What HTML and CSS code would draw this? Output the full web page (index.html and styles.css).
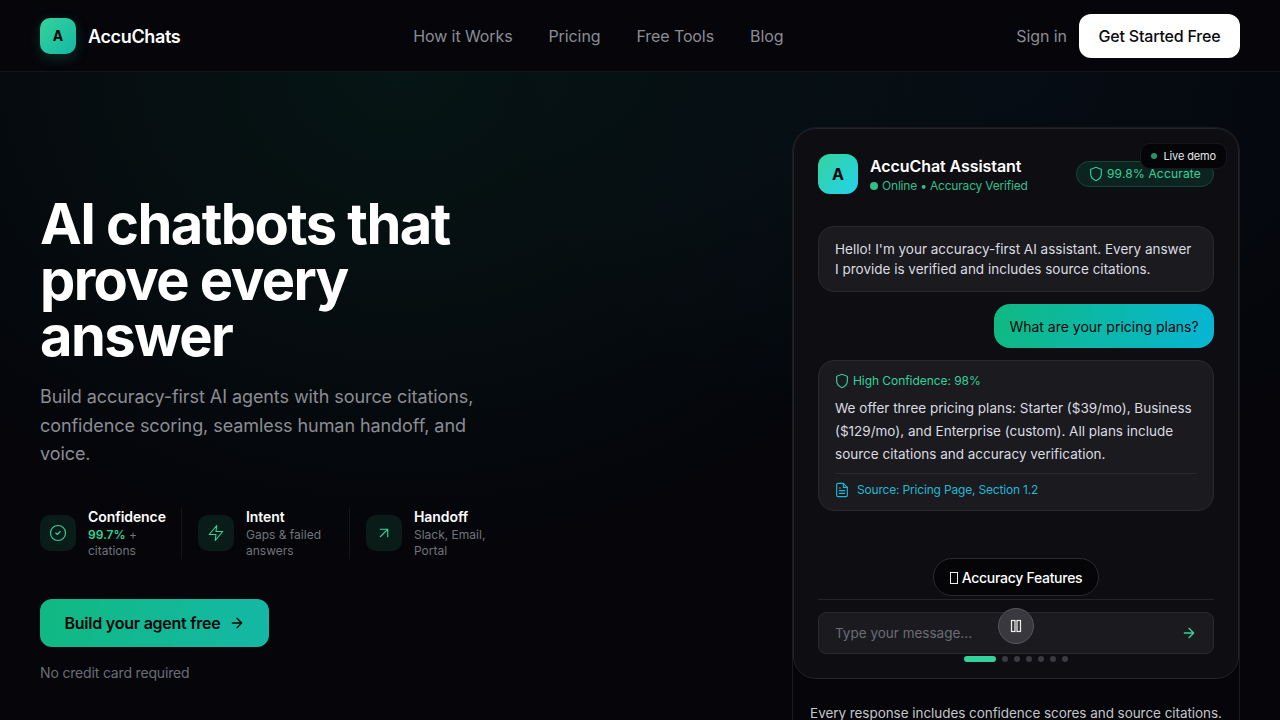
FILE: index.html
```html
<!DOCTYPE html>
<html lang="en">
<head>
<meta charset="utf-8">
<title>AccuChats</title>
<link rel="stylesheet" href="styles.css">
</head>
<body>
<header class="nav">
  <a class="brand"><span class="brand-mark">A</span><span class="brand-name">AccuChats</span></a>
  <nav class="nav-links"><a>How it Works</a><a>Pricing</a><a>Free Tools</a><a>Blog</a></nav>
  <div class="nav-actions"><a class="signin">Sign in</a><a class="btn-white">Get Started Free</a></div>
</header>
<main class="hero">
  <section class="hero-left">
    <h1>AI chatbots that prove every answer</h1>
    <p class="lead">Build accuracy-first AI agents with source citations, confidence scoring, seamless human handoff, and voice.</p>
    <div class="stats">
      <div class="stat stat-a">
        <span class="stat-icon"><svg viewBox="0 0 24 24"><circle cx="12" cy="12" r="10"/><path d="m9 12 2 2 4-4"/></svg></span>
        <div><div class="stat-title">Confidence</div><div class="stat-sub"><b>99.7%</b> + citations</div></div>
      </div>
      <div class="stat stat-b">
        <span class="stat-icon"><svg viewBox="0 0 24 24"><path d="M13 2 3 14h9l-1 8 10-12h-9l1-8z"/></svg></span>
        <div><div class="stat-title">Intent</div><div class="stat-sub">Gaps &amp; failed answers</div></div>
      </div>
      <div class="stat stat-c">
        <span class="stat-icon"><svg viewBox="0 0 24 24"><path d="M7 17 17 7M7 7h10v10"/></svg></span>
        <div><div class="stat-title">Handoff</div><div class="stat-sub">Slack, Email, Portal</div></div>
      </div>
    </div>
    <a class="cta">Build your agent free <svg viewBox="0 0 24 24"><path d="M5 12h14M12 5l7 7-7 7"/></svg></a>
    <p class="note">No credit card required</p>
  </section>
  <aside class="demo-wrap">
    <div class="demo">
      <div class="live"><i></i>Live demo</div>
      <div class="demo-head">
        <span class="avatar">A</span>
        <div class="who">
          <div class="who-name">AccuChat Assistant</div>
          <div class="who-status"><i></i>Online • Accuracy Verified</div>
        </div>
        <span class="accurate"><svg viewBox="0 0 24 24"><path d="M12 22s8-3.500 8-10V5l-8-3-8 3v7c0 6.500 8 10 8 10z"/></svg>99.8% Accurate</span>
      </div>
      <div class="msg msg-bot">Hello! I'm your accuracy-first AI assistant. Every answer I provide is verified and includes source citations.</div>
      <div class="msg msg-user">What are your pricing plans?</div>
      <div class="msg msg-answer">
        <div class="conf"><svg viewBox="0 0 24 24"><path d="M12 22s8-3.500 8-10V5l-8-3-8 3v7c0 6.500 8 10 8 10z"/></svg>High Confidence: 98%</div>
        <p>We offer three pricing plans: Starter ($39/mo), Business ($129/mo), and Enterprise (custom). All plans include source citations and accuracy verification.</p>
        <div class="source"><svg viewBox="0 0 24 24"><path d="M14 2H6a2 2 0 0 0-2 2v16a2 2 0 0 0 2 2h12a2 2 0 0 0 2-2V8z"/><path d="M14 2v6h6M16 13H8M16 17H8M10 9H8"/></svg>Source: Pricing Page, Section 1.2</div>
      </div>
      <div class="pill-row"><span class="pill"><i class="tofu"></i>Accuracy Features</span></div>
      <div class="composer">
        <div class="input"><span>Type your message...</span><svg viewBox="0 0 24 24"><path d="M5 12h14M12 5l7 7-7 7"/></svg></div>
        <span class="pause"><svg viewBox="0 0 12 14"><rect x="1.500" y="1.500" width="3.500" height="11"/><rect x="7" y="1.500" width="3.500" height="11"/></svg></span>
        <div class="dots"><b></b><i></i><i></i><i></i><i></i><i></i><i></i></div>
      </div>
    </div>
    <p class="demo-note">Every response includes confidence scores and source citations.</p>
  </aside>
</main>
</body>
</html>
```
FILE: styles.css
```css
* { box-sizing: border-box; margin: 0; padding: 0; }
html, body { height: 720px; overflow: hidden; }
body {
  font-family: Inter, "Liberation Sans", sans-serif;
  color: #fff;
  background:
    radial-gradient(ellipse 600px 480px at 400px 72px, rgba(16, 185, 129, .09), transparent 100%),
    radial-gradient(ellipse 500px 400px at 1000px 72px, rgba(20, 140, 190, .06), transparent 100%),
    #05050a;
}
.nav {
  height: 72px;
  padding: 0 40px;
  display: flex;
  justify-content: space-between;
  align-items: center;
  background: #05050a;
  border-bottom: 1px solid #10161a;
}
.brand { display: flex; align-items: center; gap: 12px; }
.brand-mark {
  width: 36px; height: 36px; border-radius: 10px;
  display: grid; place-items: center;
  background: linear-gradient(135deg, #34d399, #14b8a6);
  box-shadow: 0 4px 14px rgba(52, 211, 153, .2);
  color: #05050a; font-size: 14px; font-weight: 700;
}
.brand-name { font-size: 18px; line-height: 26px; padding-top: 2px; font-weight: 600; letter-spacing: -.02em; }
.nav-links { display: flex; gap: 36px; font-size: 16px; color: #8b8d94; letter-spacing: -.006em; }
.nav-actions { display: flex; justify-content: flex-end; align-items: center; gap: 12px; }
.signin { font-size: 16px; color: #8b8d94; letter-spacing: -.005em; }
.btn-white {
  width: 161px; height: 44px; border-radius: 12px;
  display: grid; place-items: center;
  background: #fff; color: #0a0a0f; font-size: 16px; font-weight: 500; letter-spacing: -.012em;
}
.hero {
  height: 648px;
  padding: 55px 40px 0;
  display: flex;
  justify-content: space-between;
  align-items: flex-start;
}
.hero-left { width: 470px; padding-top: 69px; }
h1 {
  width: 440px;
  font-size: 56px; line-height: 56px; font-weight: 700; letter-spacing: -.028em;
}
.lead { margin-top: 19px; width: 450px; font-size: 18px; line-height: 28.500px; color: #8b8d94; letter-spacing: -.004em; }
.stats { display: flex; margin-top: 38px; }
.stat { display: flex; gap: 12px; height: 52px; flex: none; }
.stat > div { flex: 1; }
.stat-a { width: 142px; border-right: 1px solid #15161b; }
.stat-b { width: 168px; padding-left: 16px; border-right: 1px solid #15161b; }
.stat-c { width: 156px; padding-left: 16px; }
.stat-icon {
  width: 36px; height: 36px; flex: none; margin-top: 8px; border-radius: 10px;
  display: grid; place-items: center;
  background: #0a1c18;
}
.stat-icon svg { width: 18px; height: 18px; fill: none; stroke: #34d399; stroke-width: 1.500; stroke-linecap: round; stroke-linejoin: round; }
.stat-title { font-size: 14px; line-height: 20px; font-weight: 600; letter-spacing: -.005em; }
.stat-sub { font-size: 12px; line-height: 16px; color: #72747b; }
.stat-sub b { color: #34d399; font-weight: 600; }
.cta {
  margin-top: 40px; width: 229px; height: 48px; border-radius: 12px;
  display: flex; align-items: center; justify-content: center; gap: 8px;
  background: linear-gradient(100deg, #10b981, #14b8a6);
  color: #05050a; font-size: 16px; font-weight: 600; letter-spacing: -.015em;
}
.cta svg { width: 16px; height: 16px; fill: none; stroke: #05050a; stroke-width: 2; stroke-linecap: round; stroke-linejoin: round; }
.note { margin-top: 16px; font-size: 14px; line-height: 20px; color: #6b6d74; letter-spacing: -.012em; }
.demo-wrap {
  width: 448px; height: 700px;
  border: 1px solid #1a1b20; border-radius: 24px;
}
.demo {
  position: relative;
  height: 551px;
  padding: 25px 24px 0;
  background: #0d0d12;
  border: 1px solid #222328; border-radius: 23px;
}
.live {
  position: absolute; top: 14px; right: 11px;
  height: 26px; padding: 0 10px;
  display: flex; align-items: center; gap: 6px;
  background: #050508; border: 1px solid #17181d; border-radius: 10px;
  font-size: 11px; color: #e5e5e8; letter-spacing: -.012em;
}
.live i { width: 6px; height: 6px; border-radius: 50%; background: #34d399; opacity: .7; }
.demo-head { display: flex; align-items: center; gap: 12px; margin-bottom: 32px; }
.avatar {
  width: 40px; height: 40px; border-radius: 12px;
  display: grid; place-items: center;
  background: linear-gradient(135deg, #34d399, #22d3ee);
  color: #05050a; font-size: 16px; font-weight: 700;
}
.who { flex: 1; }
.who-name { font-size: 16px; line-height: 24px; font-weight: 600; letter-spacing: -.005em; }
.who-status { display: flex; align-items: center; gap: 4px; font-size: 12px; line-height: 16px; color: #34d399; opacity: .9; letter-spacing: -.016em; }
.who-status i { width: 8px; height: 8px; border-radius: 50%; background: #34d399; }
.accurate {
  height: 26px; padding: 0 12px;
  display: flex; align-items: center; gap: 3px;
  background: #0c2420; border: 1px solid #15483a; border-radius: 13px;
  font-size: 12px; line-height: 14px; color: #34d399; letter-spacing: .015em;
}
.accurate svg, .conf svg { width: 16px; height: 16px; margin-left: -1px; fill: none; stroke: #34d399; stroke-width: 1.700; }
.msg { font-size: 14px; }
.msg-bot {
  padding: 12px 16px; font-size: 13.500px; line-height: 20px; color: #dcdce0;
  background: #1a1a1f; border: 1px solid #29292e; border-radius: 16px;
}
.msg-user {
  width: 220px; height: 44px; margin: 12px 0 12px auto; border-radius: 16px;
  display: grid; place-items: center;
  background: linear-gradient(100deg, #10b981, #06b6d4);
  color: #05050a;
}
.msg-answer {
  padding: 12px 16px 0; height: 151px;
  background: #1a1a1f; border: 1px solid #29292e; border-radius: 16px;
}
.conf { display: flex; align-items: center; gap: 3px; font-size: 12px; line-height: 16px; color: #34d399; letter-spacing: -.005em; }
.msg-answer p { margin-top: 8px; font-size: 13.500px; line-height: 23px; color: #dcdce0; }
.source {
  display: flex; align-items: center; gap: 7px;
  margin-top: 7px; padding-top: 8px;
  border-top: 1px solid #29292e;
  font-size: 12px; line-height: 16px; color: #22b8d4; letter-spacing: -.015em;
}
.source svg { width: 16px; height: 16px; margin-left: -1px; fill: none; stroke: #22b8d4; stroke-width: 1.700; stroke-linecap: round; stroke-linejoin: round; }
.pill-row { display: flex; justify-content: center; margin-top: 47px; }
.pill {
  height: 38px; padding: 0 16px;
  display: flex; align-items: center; gap: 4px;
  background: #050508; border: 1px solid #2a2a30; border-radius: 19px;
  font-size: 14px; font-weight: 500; letter-spacing: -.02em;
}
.tofu { width: 8px; height: 12px; margin-top: 2px; border: 1px solid #eee; }
.composer {
  position: relative;
  margin-top: 3px; padding-top: 12px;
  border-top: 1px solid #232328;
}
.input {
  height: 42px; padding: 0 16px;
  display: flex; align-items: center; justify-content: space-between;
  background: #1a1a1f; border: 1px solid #2a2a30; border-radius: 8px;
  font-size: 13.500px; color: #6b6d74;
}
.input svg { width: 16px; height: 16px; fill: none; stroke: #34d399; stroke-width: 2; stroke-linecap: round; stroke-linejoin: round; }
.pause {
  position: absolute; top: 8px; left: 180px;
  width: 36px; height: 36px; border-radius: 50%;
  display: grid; place-items: center;
  background: #38383e; border: 1px solid #57575d;
}
.pause svg { width: 12px; height: 14px; fill: none; stroke: #eee; stroke-width: 1.200; }
.dots {
  position: absolute; top: 56px; left: 146px;
  display: flex; align-items: center; gap: 6px;
}
.dots b { width: 32px; height: 6px; border-radius: 3px; background: #34d399; }
.dots i { width: 6px; height: 6px; border-radius: 50%; background: #3a3a40; }
.demo-note { margin-top: 24px; text-align: center; font-size: 13.500px; line-height: 20px; color: #c4c4c8; white-space: nowrap; letter-spacing: -.004em; }
```
